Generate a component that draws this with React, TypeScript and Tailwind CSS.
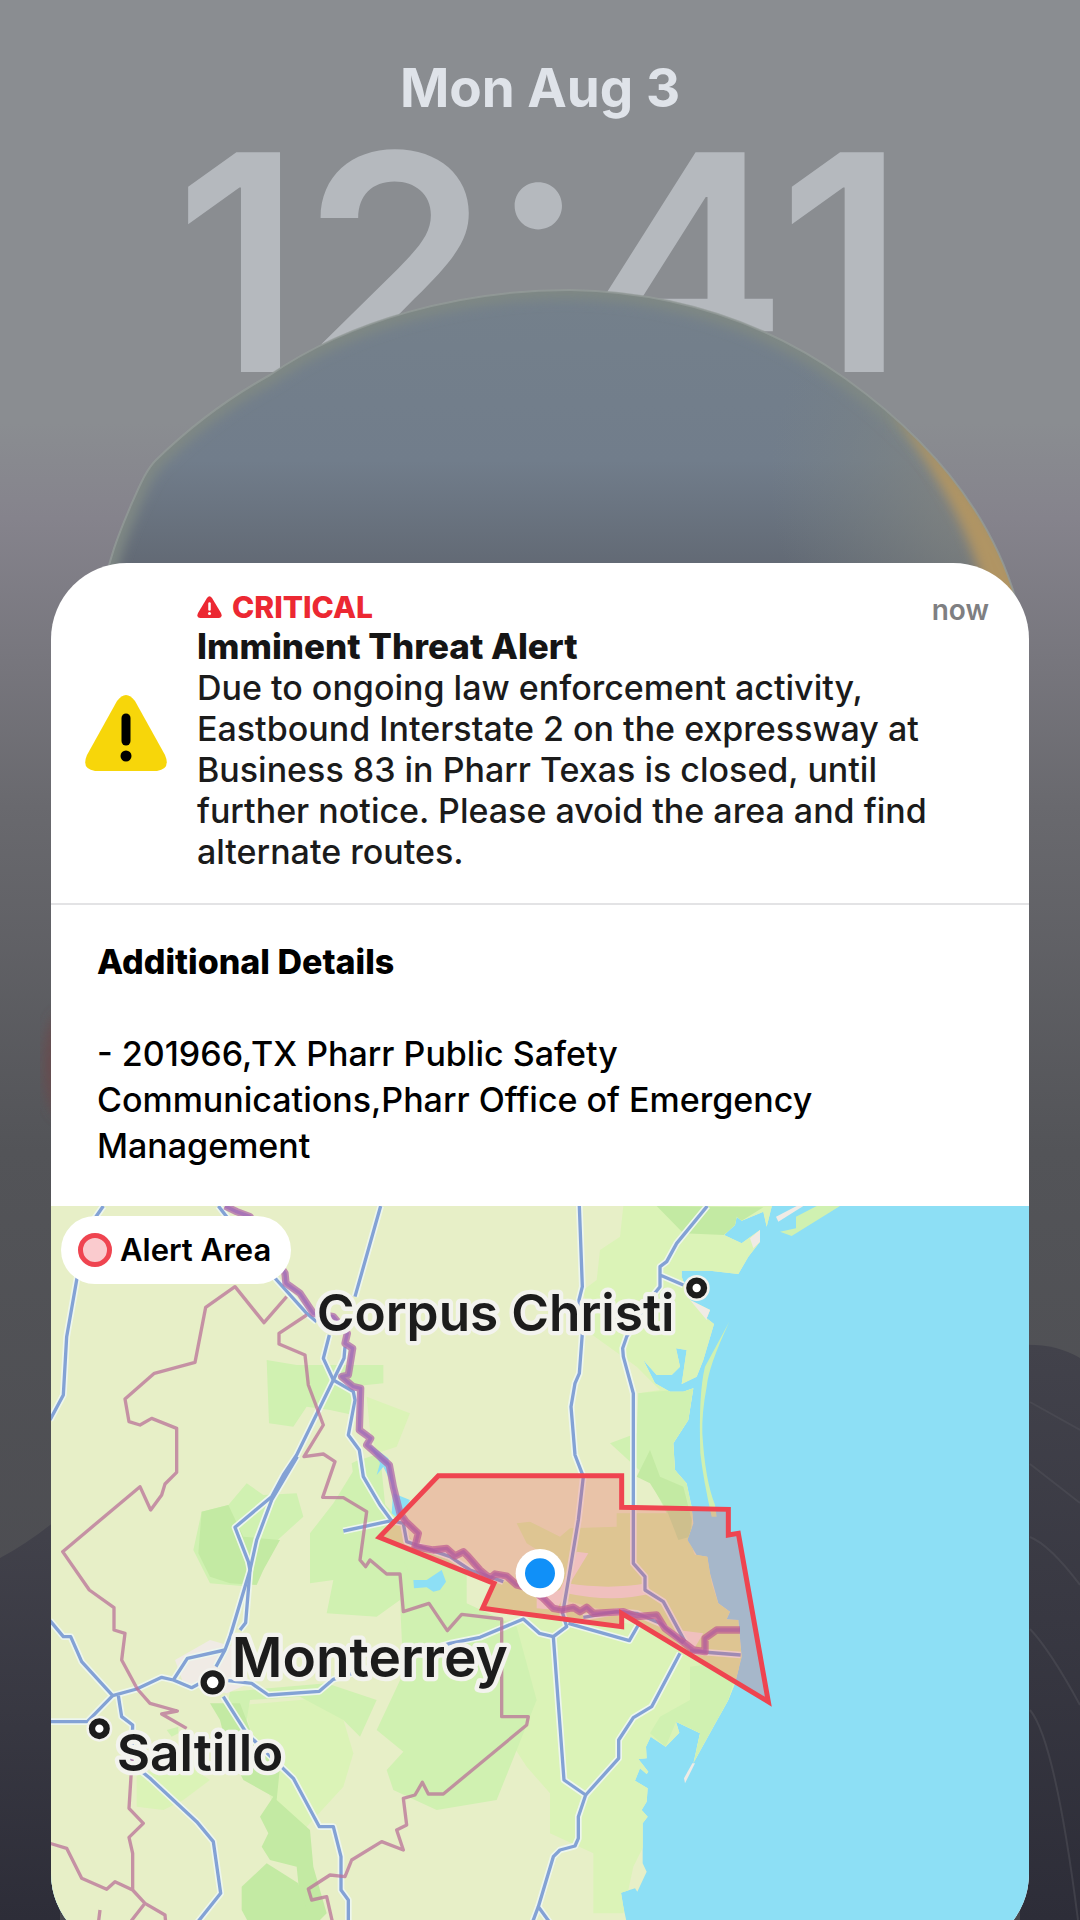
const land =
  'M0 0H2170L2150 80L2140 35L2075 62L2060 50L2055 75L2022 105L2075 130L2130 90V125L2095 170L2065 222L1980 212H1895V230L1920 300L1980 330L1970 355L1992 372L1960 480L1940 530L1895 552L1910 450L1878 445L1890 500L1865 525H1820L1780 480L1815 550L1860 575H1900L1930 565L1915 660L1870 730L1875 810L1910 850L1925 920L1930 970L1912 1020L1940 1065L1972 1070L1980 1120L2005 1210L2040 1235L2030 1258L2065 1260L2075 1370L2055 1450L2035 1500L1930 1690L1950 1600L1878 1565L1888 1598L1847 1640L1802 1610L1788 1640L1790 1675L1765 1677L1795 1715L1790 1722L1770 1705L1755 1742L1793 1765L1790 1805L1775 1830L1793 1850L1778 1870V1990L1790 2015L1762 2075L1755 2065L1713 2078L1720 2120L1750 2260H0Z'

const pale = [
  'M1720 18L1710 110L1650 150L1640 240L1600 270L1620 400L1760 500L1830 570L1765 580L1770 680L1800 830L1860 830L2200 600V18Z',
  'M950 590L1080 640L1040 740L980 760L960 690Z',
  'M1200 1280L1560 1240L1900 1300L2100 1420L1900 1700L1750 2000L1720 2140H1630V1960L1500 1900V1780L1430 1700L1300 1500Z',
  'M580 1515L860 1490L910 1660L880 1760L770 1880L700 1900L660 1790Z',
  'M260 1720L420 1700L480 1740L400 1800L340 1830L260 1820Z',
]

const greens = [
  'M650 480L740 495L1000 495V550L900 560L910 645L840 630L770 620L730 680L657 670Z',
  'M590 850L640 885L740 880L760 950L650 1050L640 1110L600 1160L480 1150L430 1050L455 935L535 915Z',
  'M905 790L925 780L945 850L1030 940L1100 1040L1250 1100V1230L1140 1200L990 1160L960 1060L930 980Z',
  'M850 910L930 780L990 760L1010 960L1090 1150L1250 1210L1400 1280L1460 1500L1340 1800L1160 1830L1030 1770L1010 1710L1060 1655L980 1590L1060 1420L1050 1200L980 1250L830 1240L850 1140L780 1150L780 1000Z',
  'M1765 580L1930 565L1915 660L1870 730L1875 810L1910 850L1925 920L1930 1060L1880 1000L1800 840L1680 730L1760 700Z',
  'M540 1475L830 1450L980 1500L930 1610L880 1560L750 1490L600 1500L580 1620L520 1580Z',
  'M350 1590L385 1580V1600L365 1610Z',
  'M1920 1400L2070 1380L2035 1500L1930 1690L1950 1600L1878 1565L1847 1640L1800 1600L1830 1550L1920 1500Z',
]

const deepGreens = [
  'M455 935L535 915L580 1010L690 1020L640 1110L620 1155L540 1150L480 1130L445 1060Z',
  'M1820 18L2140 22L2075 62L2022 105L1900 100Z',
  'M1800 750L1830 830L1900 860L1925 960L1920 1010L1885 1020L1850 930L1800 850L1760 830Z',
  'M480 1510L570 1510L620 1640L690 1700L680 1800L780 1890L790 2000L830 2140L770 2200L745 2050L740 2000L660 1980L635 1940L655 1900L630 1850L670 1790L580 1740L530 1640L510 1560Z',
  'M650 1990L745 2050L780 2160L740 2250H640L575 2130V2060Z',
]

// fields and towns of the Rio Grande valley
const valley = [
  'M1400 970L1440 965L1530 1010L1560 985L1700 980V940H1930L1912 1020L1935 1065H1972L1985 1150L2005 1210L2040 1235L2030 1258L2065 1260L2075 1370L2055 1450L1700 1240L1340 1150L1400 1140L1500 1180L1510 1080L1430 1030Z',
  'M1332 1150L1420 1150L1480 1200L1715 1250V1280L1298 1225Z',
  'M988 1012L1050 950L1095 1040Z',
]

const towns = [
  'M375 1380L480 1320L550 1340L600 1450L530 1480L400 1450Z',
  'M1920 300L1950 265L1990 330L1970 360Z',
  'M1550 1150Q1680 1170 1790 1150L1805 1180Q1690 1210 1550 1180Z',
  'M1580 1055L1615 1060L1560 1150L1520 1230L1460 1225V1190L1530 1170Z',
  'M1880 1290L1960 1300L1930 1350L1890 1330Z',
]

const roads = [
  'M160 18L110 90L80 240L50 410L40 585L0 660',
  'M505 18L600 140L680 240L770 340L800 365',
  'M992 18L915 290M838 405L820 475L850 540L910 575L915 600L895 705L928 750L940 830L990 915L1025 962L880 993',
  'M885 440L882 475L740 765L700 825L665 890L555 982L595 1085L600 1110L540 1310L525 1350L498 1400',
  'M742 770L665 900L620 1020L600 1110L587 1268L570 1290',
  'M1025 962L1060 970L1070 1025L1200 1070L1260 1110L1360 1145',
  'M1600 1252L1700 1235L1760 1240L1830 1270L1900 1330',
  'M0 1262L40 1310H62L95 1385L188 1487L112 1565H3',
  'M188 1487L260 1467L335 1432L370 1440L425 1463L450 1450M370 1440L412 1375L525 1350',
  'M205 1487L215 1550L248 1575L245 1690L300 1735L440 1865L490 1925L512 2080L440 2170L400 2250',
  'M535 1442L605 1450L655 1485L808 1474L850 1438L1000 1390L1200 1330L1290 1312L1420 1257L1468 1300L1510 1310L1550 1280L1538 1240L1550 1170L1585 960L1600 830L1575 765L1563 620L1575 550L1588 520L1597 400L1587 300L1597 260L1588 18',
  'M520 1490L590 1600L730 1735L808 1880H850L873 1970V2070L895 2100V2250',
  'M1972 18L1880 130L1850 185L1830 200V225L1900 255M1830 225V260L1790 310L1730 410L1718 445L1720 470L1750 580V1090L1785 1130V1170L1840 1205L1905 1325',
  'M1510 1310L1542 1740L1607 1785L1585 1850V1915L1575 1938L1530 1950L1510 1970L1465 2120L1420 2240M1465 2120L1530 2210',
  'M1555 1270L1738 1322L1765 1275M1890 1360L1805 1520L1750 1553L1706 1620V1675L1607 1785',
  'M1920 1353L2072 1365',
]

const stateLines = [
  'M710 290L642 368L555 260L467 322L435 487L313 520L225 597L237 665L270 675L305 655L380 685V817L345 852L335 885L302 930L270 860L38 1055L118 1170L192 1223V1290L225 1300L215 1380L262 1467L300 1510L382 1533L335 1542L410 1585',
  'M770 345L687 400V432L765 465L775 555L820 675L762 770L820 762L855 785L818 892L880 893L950 935L930 1080L947 1100L960 1080L1010 1122H1050L1060 1235L1137 1210L1192 1292L1235 1243L1355 1257V1550H1435L1430 1575L1180 1782H1135L1117 1747L1095 1785L1060 1795L1070 1875L1040 1890L1060 1950L995 1925L905 1980L885 2030L840 2025L775 2067L785 2100L830 2090L855 2200',
  'M248 1650L237 1825L280 1870L237 1912L248 1960V2070L285 2110L230 2180M285 2110L345 2145L350 2200M0 1930L50 1945L95 2035L170 2068L195 2045L248 2070M150 2130L140 2210',
]

const river =
  'M525 18L560 35L600 50L640 120L705 220L708 250L750 280L790 340L850 350L892 400L885 430L908 445L895 525L875 530L910 560L932 565L928 690L962 715L950 735L1018 795L1030 860L1050 940L1068 965L1105 1000L1095 1040L1150 1050L1190 1045L1215 1068L1240 1055L1255 1070L1290 1110L1320 1135L1335 1122L1370 1128L1400 1155L1440 1165L1480 1195L1510 1225L1535 1230L1570 1222L1590 1235L1610 1222L1630 1240L1720 1235L1760 1250L1820 1245L1845 1285L1885 1315L1930 1350L1965 1355V1315L2000 1290H2070'

const alertArea =
  'M988 1012L1165 827H1715V922L2035 928V1005L2065 1000L2155 1505L1715 1240V1280L1298 1225L1332 1150Z'

const cities = [
  { name: 'Corpus Christi', x: 800, y: 392, size: 154, dot: [1940, 264, 22] },
  { name: 'Monterrey', x: 545, y: 1430, size: 165, dot: [488, 1447, 27] },
  { name: 'Saltillo', x: 200, y: 1714, size: 154, dot: [148, 1586, 22] },
]

function AlertMap() {
  return (
    <svg viewBox="3 18 2934 2232" className="block w-full" role="img" aria-label="Map">
      <rect width="3000" height="2300" fill="#8ddff5" />
      <path d={land} fill="#e7efc7" />
      <clipPath id="land">
        <path d={land} />
      </clipPath>
      <g clipPath="url(#land)">
        {pale.map((d) => <path key={d} d={d} fill="#dbf3b7" />)}
        {greens.map((d) => <path key={d} d={d} fill="#d0f1b1" />)}
        {valley.map((d) => <path key={d} d={d} fill="#d8f2a9" />)}
        {deepGreens.map((d) => <path key={d} d={d} fill="#c3eaa3" />)}
        {towns.map((d) => <path key={d} d={d} fill="#f0ebe5" />)}
      </g>
      <path d="M2100 115L2130 90V125L2110 145Z" fill="#f0ebe5" />
      <path d="M2178 50L2240 18H2260L2185 65Z" fill="#f0ebe5" />
      <path d="M2238 50L2300 18H2370L2225 108L2190 95L2238 85Z" fill="#d0f1b1" />
      <path d="M2038 365Q1975 500 1970 560Q1955 640 1957 700Q1965 840 1995 915L2000 950L1985 950Q1960 840 1951 760Q1945 580 1965 500Z" fill="#d0f1b1" />
      <path d="M1927 1690L1935 1690L1905 1750L1902 1735Z" fill="#f0ebe5" />
      <path d="M1090 1140L1130 1140L1175 1110L1188 1145L1170 1170L1150 1175L1130 1162L1092 1165Z" fill="#8ddff5" />
      <path d="M955 730L1015 775L1030 880L1080 900L1050 960L1025 940L1030 860L1000 800L980 825L990 790Z" fill="#8ddff5" />
      <g fill="none" strokeLinejoin="round">
        {roads.map((d) => <path key={d} d={d} stroke="#edf6ee" strokeWidth="20" />)}
        {roads.map((d) => <path key={d} d={d} stroke="#83a2d5" strokeWidth="10" />)}
        {stateLines.map((d) => <path key={d} d={d} stroke="#b97198" strokeOpacity=".75" strokeWidth="10" />)}
        <path d={river} stroke="#b06aa9" strokeOpacity=".75" strokeWidth="22" />
        <path d={river} stroke="#9160bd" strokeOpacity=".5" strokeWidth="10" />
      </g>
      <path d={alertArea} fill="#ef4450" fillOpacity=".26" stroke="#ef4450" strokeWidth="15" />
      {cities.map((c) => (
        <g key={c.name}>
          <circle cx={c.dot[0]} cy={c.dot[1]} r={c.dot[2] + 17} fill="#f3f3ee" />
          <circle cx={c.dot[0]} cy={c.dot[1]} r={c.dot[2]} fill="#fff" stroke="#1c1c1c" strokeWidth="19" />
          <text
            x={c.x}
            y={c.y}
            fontSize={c.size}
            fill="#1c1c1c"
            stroke="#f3f3ee"
            strokeWidth="26"
            strokeLinejoin="round"
            paintOrder="stroke"
            className="font-semibold"
          >
            {c.name}
          </text>
        </g>
      ))}
      <circle cx="1470" cy="1120" r="73" fill="#fff" />
      <circle cx="1470" cy="1120" r="45" fill="#1090f8" />
    </svg>
  )
}

function Wallpaper() {
  return (
    <svg viewBox="0 0 1080 1920" preserveAspectRatio="none" className="absolute inset-0 size-full" aria-hidden="true">
      <defs>
        <linearGradient id="sky" x1="0" x2="0" y1="0" y2="1">
          <stop offset="0" stopColor="#8a8d91" />
          <stop offset=".22" stopColor="#8a8d91" />
          <stop offset=".27" stopColor="#85838c" />
          <stop offset=".42" stopColor="#69696e" />
          <stop offset=".6" stopColor="#535458" />
          <stop offset="1" stopColor="#48484d" />
        </linearGradient>
        <linearGradient id="hill" x1="0" x2="0" y1="0" y2="1">
          <stop offset="0" stopColor="#42424b" />
          <stop offset="1" stopColor="#2d2d38" />
        </linearGradient>
        <filter id="haze">
          <feGaussianBlur stdDeviation="6" />
        </filter>
      </defs>
      <rect width="1080" height="1920" fill="url(#sky)" />
      <ellipse cx="60" cy="1065" rx="16" ry="52" fill="#6b4a4c" opacity=".8" filter="url(#haze)" />
      <path d="M0 1558Q30 1542 60 1517V1920H0Z" fill="url(#hill)" />
      <path d="M1020 1345Q1055 1343 1080 1358V1920H1020Z" fill="url(#hill)" />
      <g fill="none" stroke="#51515a" strokeWidth="2" opacity=".5">
        <path d="M1030 1402L1080 1430M1030 1464L1080 1503M1030 1537Q1050 1545 1080 1585M1030 1629Q1050 1650 1080 1705M1030 1710Q1055 1740 1078 1920" />
      </g>
    </svg>
  )
}

const planetPath =
  'M102 600C108 555 125 520 131 505C140 485 146 470 156 460C195 422 232 396 270 375C350 320 460 290 570 290C690 292 780 332 846 379C928 438 990 510 1016 600Z'

function Planet() {
  return (
    <svg viewBox="0 0 1080 600" className="absolute inset-x-0 top-0 w-full" aria-hidden="true">
      <defs>
        <linearGradient id="planet" x1="0" x2="0" y1="0" y2="1">
          <stop offset="0" stopColor="#74808b" />
          <stop offset=".55" stopColor="#717d8b" />
          <stop offset="1" stopColor="#5d636d" />
        </linearGradient>
        <radialGradient id="glow" gradientUnits="userSpaceOnUse" cx="1020" cy="480" r="250">
          <stop offset="0" stopColor="#8f8c80" stopOpacity=".8" />
          <stop offset=".4" stopColor="#838681" stopOpacity=".6" />
          <stop offset="1" stopColor="#7b8482" stopOpacity="0" />
        </radialGradient>
        <filter id="soft">
          <feGaussianBlur stdDeviation="6" />
        </filter>
        <clipPath id="disc">
          <path d={planetPath} />
        </clipPath>
      </defs>
      <path d={planetPath} fill="url(#planet)" />
      <g clipPath="url(#disc)">
        <path d={planetPath} fill="url(#glow)" />
        <path d={planetPath} fill="none" stroke="#7f8884" strokeWidth="18" filter="url(#soft)" />
        <path d="M890 408C950 460 1005 530 1030 610H988C978 545 940 475 890 408Z" fill="#b09463" filter="url(#soft)" />
      </g>
      <path d={planetPath} fill="none" stroke="#949b99" strokeWidth="2" strokeOpacity=".8" />
    </svg>
  )
}

export default function App() {
  return (
    <main className="relative h-screen overflow-hidden bg-[#8a8d91] font-['Inter',sans-serif]">
      <Wallpaper />
      <header className="relative h-[563px] pt-14 text-center">
        <p className="text-[53px] leading-16 font-bold text-[#dfe3e9]">Mon Aug 3</p>
        <h1 className="text-[302px] leading-[284px] font-semibold text-[#b5b9be]">12:41</h1>
      </header>
      <Planet />

      <article className="relative mx-[51px] overflow-hidden rounded-[76px] bg-white">
        <section className="flex items-center gap-[30px] border-b-2 border-[#e3e3e5] py-[25px] pr-10 pl-[34px]">
          <svg viewBox="0 0 82 76" className="w-[82px] shrink-0" aria-hidden="true">
            <path d="M32 6Q41 -6 50 6L80 60Q86 74 72 76H10Q-4 74 2 60Z" fill="#f7d60a" />
            <path d="M41 23V46" stroke="#000" strokeWidth="9" strokeLinecap="round" />
            <circle cx="41" cy="61" r="5.5" />
          </svg>
          <div className="flex-1 pb-1.5">
            <div className="flex items-start justify-between">
              <p className="flex items-center gap-2.5 text-[30px] leading-[38px] font-extrabold text-[#ec2832]">
                <svg viewBox="0 0 25 22" className="w-[25px]" aria-hidden="true">
                  <path d="M10 2Q12.500 -1.500 15 2L24 17Q26 21.500 22 22H3Q-1 21.500 1 17Z" fill="currentColor" />
                  <path d="M12.500 7.500V13.500" stroke="#fff" strokeWidth="2.500" strokeLinecap="round" />
                  <circle cx="12.500" cy="17.500" r="1.500" fill="#fff" />
                </svg>
                CRITICAL
              </p>
              <time className="pt-1.5 text-[28px] leading-8 font-semibold text-[#7f7f82]">now</time>
            </div>
            <h2 className="text-[35px] leading-[41px] font-extrabold text-[#151515]">Imminent Threat Alert</h2>
            <p className="max-w-[750px] text-[34px] leading-[41px] font-medium text-[#1b1b1b]">
              Due to ongoing law enforcement activity, Eastbound Interstate 2 on the expressway at Business 83 in
              Pharr Texas is closed, until further notice. Please avoid the area and find alternate routes.
            </p>
          </div>
        </section>

        <section className="px-[46px] pt-[34px] pb-[37px] text-[34px] leading-[46px] text-black">
          <h2 className="mb-[46px] font-extrabold">Additional Details</h2>
          <p className="max-w-[750px] font-medium">
            - 201966,TX Pharr Public Safety Communications,Pharr Office of Emergency Management
          </p>
        </section>

        <section className="relative">
          <AlertMap />
          <div className="absolute top-[10px] left-[10px] flex items-center gap-2 rounded-full bg-white py-4 pr-5 pl-[17px]">
            <span className="size-[34px] rounded-full border-5 border-[#ef4450] bg-[#facbce]" />
            <span className="text-[31px] leading-9 font-semibold text-black">Alert Area</span>
          </div>
        </section>
      </article>
    </main>
  )
}
